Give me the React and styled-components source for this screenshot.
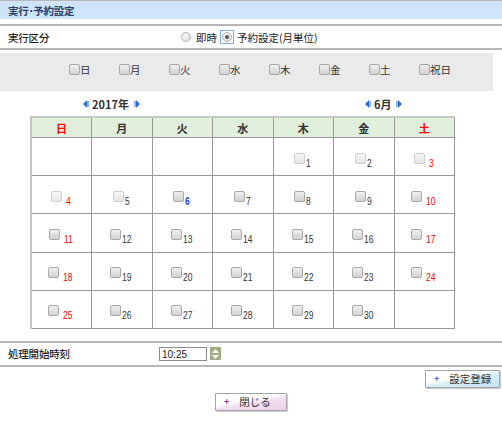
import React from "react";
import styled, { createGlobalStyle, css } from "styled-components";

const Global = createGlobalStyle`
  html, body { margin: 0; padding: 0; background: #fff; }
  body { font-family: "Noto Sans CJK JP", "Liberation Sans", sans-serif; color: #333; }
`;

const Page = styled.div`
  width: 502px;
  height: 423px;
  overflow: hidden;
  display: flex;
  flex-direction: column;
`;

const TitleBar = styled.div`
  height: 18px;
  border-top: 1px solid #b8b8b8;
  background: #d0e4f9;
  display: flex;
  align-items: center;
  padding-left: 8px;
  font-size: 10.5px;
  font-weight: bold;
  color: #26406e;
  letter-spacing: -0.3px;
`;

const FieldRow = styled.div`
  margin-top: ${(p) => p.$mt || 0}px;
  height: ${(p) => p.$h}px;
  border-top: 2px solid #b6b6b6;
  ${(p) => p.$bottom && css`border-bottom: 2px solid #b6b6b6;`}
  display: flex;
  align-items: center;
  font-size: 10.5px;
  color: #222;
`;

const Label = styled.div`
  width: ${(p) => p.$w}px;
  padding-left: 8px;
  box-sizing: border-box;
  letter-spacing: -0.2px;
  font-weight: 500;
`;

const RadioGroup = styled.label`
  display: flex;
  align-items: center;
  margin-right: ${(p) => p.$mr || 0}px;
`;

const RadioFrame = styled.span`
  display: inline-flex;
  align-items: center;
  justify-content: center;
  width: 14px;
  height: 14px;
  margin-right: 3px;
  box-sizing: border-box;
  border: 1px solid ${(p) => (p.$focus ? "#86aee6" : "transparent")};
`;

const Radio = styled.span`
  width: 10px;
  height: 10px;
  border-radius: 50%;
  border: 1px solid #b5b5b5;
  background: radial-gradient(circle at 40% 35%, #fafafa, #d6d6d6);
  display: inline-flex;
  align-items: center;
  justify-content: center;
  box-sizing: border-box;
  ${(p) =>
    p.$checked &&
    css`
      &::after {
        content: "";
        width: 4px;
        height: 4px;
        border-radius: 50%;
        background: #555;
      }
    `}
`;

const Panel = styled.div`
  margin-top: 3px;
  width: 493px;
  height: 38px;
  background: #e9eae9;
  display: flex;
  padding: 10px 0 0 69px;
  box-sizing: border-box;
`;

const WeekCheck = styled.label`
  width: 50px;
  display: flex;
  align-items: center;
  font-size: 10.5px;
  color: #333;
  height: 13px;
`;

const Box = styled.span`
  display: inline-block;
  width: 9px;
  height: 9px;
  border: 1px solid ${(p) => (p.$disabled ? "#cfcfcf" : "#a8a8a8")};
  border-radius: 2px;
  background: ${(p) =>
    p.$disabled
      ? "linear-gradient(#f6f6f6, #e6e6e6)"
      : "linear-gradient(#efefef, #d2d2d2)"};
  box-sizing: content-box;
  flex: none;
`;

const NavRow = styled.div`
  height: 25px;
  display: flex;
  align-items: center;
`;

const Nav = styled.div`
  display: flex;
  align-items: center;
  margin-left: ${(p) => p.$ml}px;
  font-size: 11px;
  font-weight: bold;
  color: #333;
  gap: 2px;
`;

const NavText = styled.span`
  margin: 0 3px 0 1px;
`;

const Arrow = ({ dir }) => (
  <svg width="7" height="8" viewBox="0 0 7 8">
    {dir === "left" ? (
      <>
        <polygon points="5,0 1,4 5,8" fill="#2a6fd6" />
        <rect x="5" y="1" width="2" height="6" fill="#8fb4ea" />
      </>
    ) : (
      <>
        <rect x="0" y="1" width="2" height="6" fill="#8fb4ea" />
        <polygon points="2,0 6,4 2,8" fill="#2a6fd6" />
      </>
    )}
  </svg>
);

const Table = styled.table`
  margin-left: 30px;
  width: 425px;
  border-collapse: collapse;
  table-layout: fixed;
  border-top: 2px solid #c6c6c6;
  border-left: 2px solid #c6c6c6;
  border-right: 1px solid #8a8a8a;
  border-bottom: 1px solid #8a8a8a;
`;

const Th = styled.th`
  height: 19px;
  padding: 0;
  background: #e0eedc;
  border: 1px solid #999;
  font-size: 11px;
  font-weight: bold;
  color: ${(p) => (p.$red ? "#f00" : "#333")};
`;

const Td = styled.td`
  height: 37.2px;
  padding: 0;
  border: 1px solid #999;
  border-top-color: #c4c4c4;
  text-align: center;
  vertical-align: middle;
`;

const CellInner = styled.div`
  display: inline-flex;
  align-items: flex-start;
  padding-top: 2px;
`;

const Num = styled.span`
  font-family: "Liberation Sans Narrow", "Liberation Sans", sans-serif;
  font-size: 10px;
  line-height: 10px;
  margin-top: 6px;
  transform: scaleX(0.85);
  transform-origin: left;
  margin-left: ${(p) => (p.$red ? 4 : 1)}px;
  color: ${(p) => (p.$red ? "#f00" : p.$today ? "#2040ff" : "#333")};
  font-weight: ${(p) => (p.$today ? "bold" : "normal")};
`;

const TimeRow = styled(FieldRow)`
  margin-top: 12px;
`;

const TimeInput = styled.div`
  width: 48px;
  height: 14px;
  border: 1px solid #8c8c8c;
  font-family: "Liberation Sans", sans-serif;
  font-size: 10px;
  line-height: 14px;
  padding-left: 2px;
  box-sizing: border-box;
  color: #222;
`;

const Spinner = styled.div`
  margin-left: 3px;
  width: 11px;
  height: 13px;
  background: #9cae84;
  display: flex;
  flex-direction: column;
  align-items: center;
  justify-content: space-around;
  padding: 1px 0;
  box-sizing: border-box;
`;

const ButtonRow = styled.div`
  display: flex;
  justify-content: ${(p) => p.$justify};
  padding-right: ${(p) => p.$pr || 0}px;
  margin-top: ${(p) => p.$mt}px;
`;

const Button = styled.button`
  width: ${(p) => p.$w}px;
  height: 18px;
  padding: 0 0 0 8px;
  border: 1px solid #a4a4a4;
  border-radius: 1px;
  box-shadow: 1px 1px 1px #c8c8c8;
  background: ${(p) =>
    p.$tone === "blue"
      ? "linear-gradient(170deg, #ffffff 0%, #ffffff 40%, #d7eef7 55%, #c4e4f1 100%)"
      : "linear-gradient(170deg, #ffffff 0%, #ffffff 40%, #f3dff0 55%, #ecd0ea 100%)"};
  display: flex;
  align-items: center;
  font-family: "Noto Sans CJK JP", sans-serif;
  font-size: 10.5px;
  color: #333;
  cursor: pointer;
`;

const Plus = styled.span`
  color: ${(p) => p.$c};
  font-size: 9px;
  font-weight: bold;
  margin-right: 10px;
`;

const weekLabels = ["日", "月", "火", "水", "木", "金", "土", "祝日"];
const heads = ["日", "月", "火", "水", "木", "金", "土"];

const weeks = [
  [null, null, null, null, 1, 2, 3],
  [4, 5, 6, 7, 8, 9, 10],
  [11, 12, 13, 14, 15, 16, 17],
  [18, 19, 20, 21, 22, 23, 24],
  [25, 26, 27, 28, 29, 30, null],
];

export default function App() {
  return (
    <Page>
      <Global />
      <TitleBar>実行･予約設定</TitleBar>
      <FieldRow $mt={5} $h={22} $bottom>
        <Label $w={179}>実行区分</Label>
        <RadioGroup $mr={3}>
          <RadioFrame>
            <Radio />
          </RadioFrame>
          即時
        </RadioGroup>
        <RadioGroup>
          <RadioFrame $focus>
            <Radio $checked />
          </RadioFrame>
          予約設定(月単位)
        </RadioGroup>
      </FieldRow>
      <Panel>
        {weekLabels.map((w) => (
          <WeekCheck key={w}>
            <Box />
            {w}
          </WeekCheck>
        ))}
      </Panel>
      <NavRow>
        <Nav $ml={82}>
          <Arrow dir="left" />
          <NavText>2017年</NavText>
          <Arrow dir="right" />
        </Nav>
        <Nav $ml={223}>
          <Arrow dir="left" />
          <NavText>6月</NavText>
          <Arrow dir="right" />
        </Nav>
      </NavRow>
      <Table>
        <thead>
          <tr>
            {heads.map((h, i) => (
              <Th key={h} $red={i === 0 || i === 6}>
                {h}
              </Th>
            ))}
          </tr>
        </thead>
        <tbody>
          {weeks.map((wk, r) => (
            <tr key={r}>
              {wk.map((d, i) => (
                <Td key={i}>
                  {d && (
                    <CellInner>
                      <Box $disabled={d < 6} />
                      <Num $red={i === 0 || i === 6} $today={d === 6}>
                        {d}
                      </Num>
                    </CellInner>
                  )}
                </Td>
              ))}
            </tr>
          ))}
        </tbody>
      </Table>
      <TimeRow $h={22} $bottom>
        <Label $w={159}>処理開始時刻</Label>
        <TimeInput>10:25</TimeInput>
        <Spinner>
          <svg width="7" height="4" viewBox="0 0 7 4">
            <polygon points="0,4 3.5,0 7,4" fill="#fff" />
          </svg>
          <svg width="7" height="4" viewBox="0 0 7 4">
            <polygon points="0,0 3.5,4 7,0" fill="#fff" />
          </svg>
        </Spinner>
      </TimeRow>
      <ButtonRow $justify="flex-end" $pr={2} $mt={3}>
        <Button $w={75} $tone="blue">
          <Plus $c="#2a6fd6">+</Plus>
          設定登録
        </Button>
      </ButtonRow>
      <ButtonRow $justify="center" $mt={5}>
        <Button $w={72} $tone="pink">
          <Plus $c="#8a3aa0">+</Plus>
          閉じる
        </Button>
      </ButtonRow>
    </Page>
  );
}
